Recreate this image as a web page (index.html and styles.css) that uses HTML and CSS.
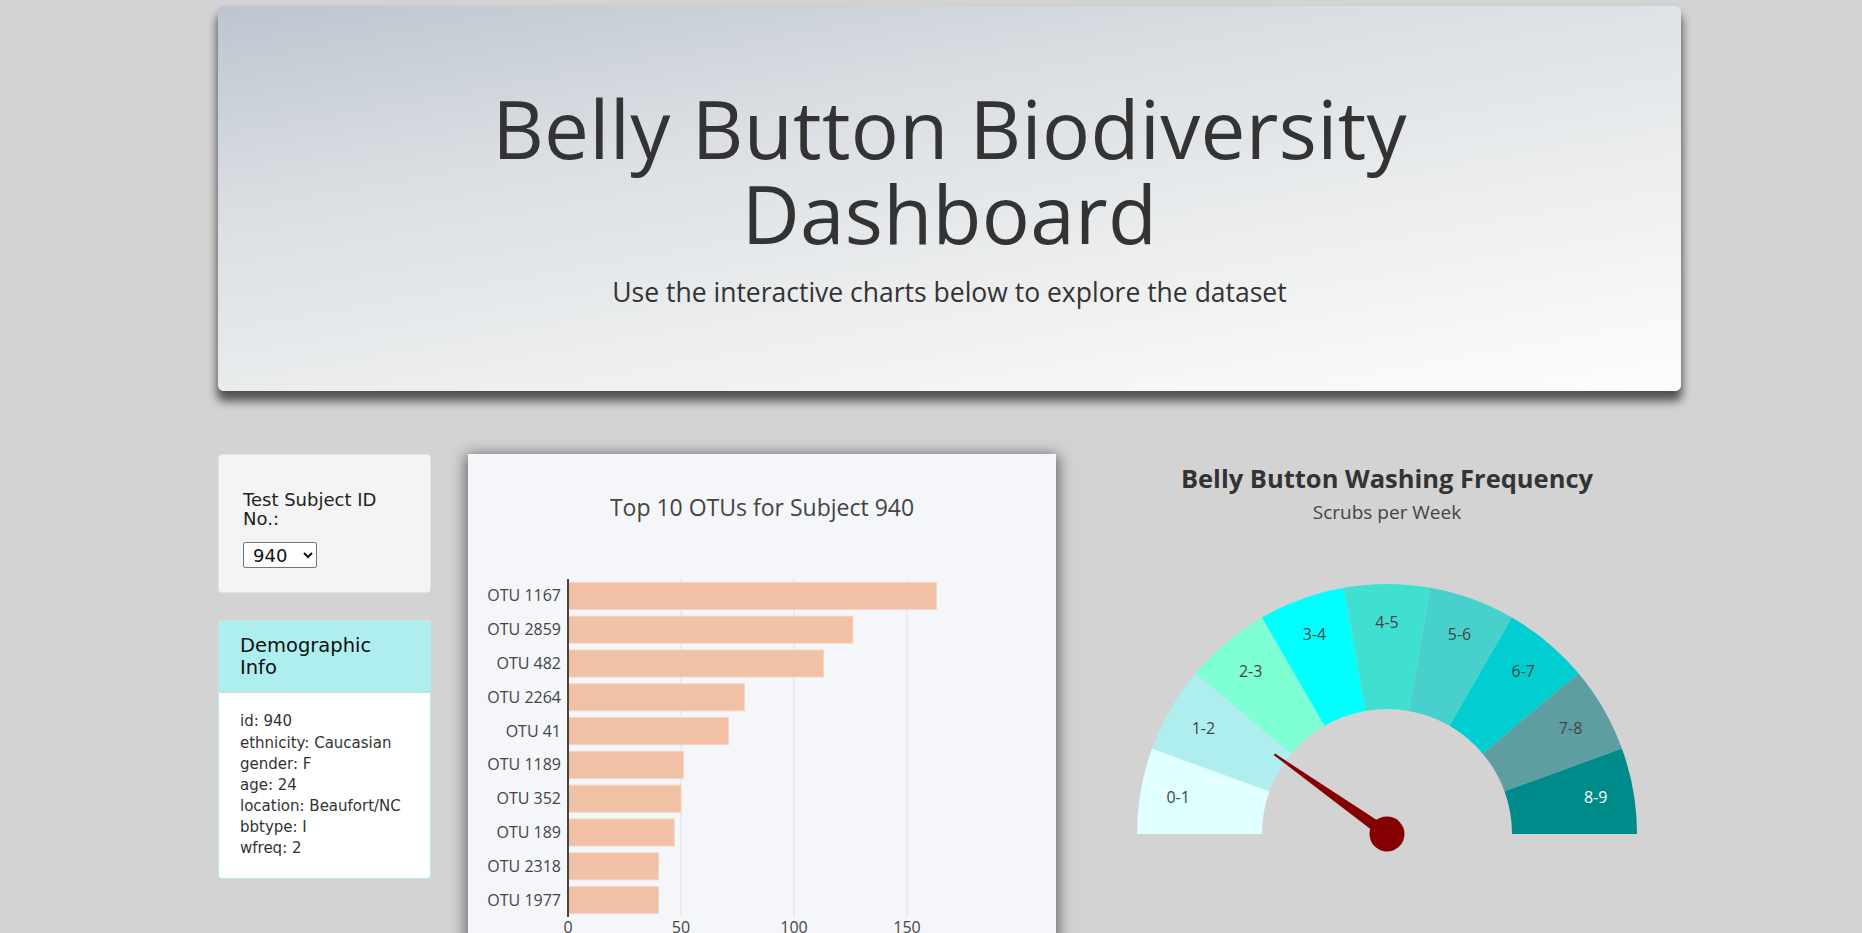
FILE: index.html
```html
<!DOCTYPE html>
<html lang="en">
<head>
<meta charset="utf-8">
<title>Belly Button Biodiversity Dashboard</title>
<link rel="stylesheet" href="styles.css">
</head>
<body>
<div class="page">
  <header class="jumbotron">
    <h1 class="jumbo-title"><span class="jumbo-line">Belly Button Biodiversity</span><span class="jumbo-line">Dashboard</span></h1>
    <p class="jumbo-sub">Use the interactive charts below to explore the dataset</p>
  </header>

  <div class="row">
    <aside class="side">
      <div class="well">
        <h5 class="well-label">Test Subject ID No.:</h5>
        <select class="subject-select">
          <option>940</option>
          <option>941</option>
          <option>943</option>
        </select>
      </div>
      <div class="panel">
        <div class="panel-heading">
          <h3 class="panel-title">Demographic Info</h3>
        </div>
        <div class="panel-body">
          <div class="meta">id: 940</div>
          <div class="meta">ethnicity: Caucasian</div>
          <div class="meta">gender: F</div>
          <div class="meta">age: 24</div>
          <div class="meta">location: Beaufort/NC</div>
          <div class="meta">bbtype: I</div>
          <div class="meta">wfreq: 2</div>
        </div>
      </div>
    </aside>

    <section class="bar-card">
      <svg class="bar-svg" width="588" height="520" viewBox="0 0 588 520">
        <text class="plot-title" x="294" y="62" text-anchor="middle">Top 10 OTUs for Subject 940</text>
        <g class="grid">
          <line x1="213" y1="125" x2="213" y2="463"/>
          <line x1="326" y1="125" x2="326" y2="463"/>
          <line x1="439" y1="125" x2="439" y2="463"/>
        </g>
        <g class="bars">
          <rect x="100" y="128.4" width="368.4" height="27"/>
          <rect x="100" y="162.2" width="284.8" height="27"/>
          <rect x="100" y="196.0" width="255.4" height="27"/>
          <rect x="100" y="229.8" width="176.3" height="27"/>
          <rect x="100" y="263.6" width="160.5" height="27"/>
          <rect x="100" y="297.4" width="115.3" height="27"/>
          <rect x="100" y="331.2" width="113.0" height="27"/>
          <rect x="100" y="365.0" width="106.2" height="27"/>
          <rect x="100" y="398.8" width="90.4" height="27"/>
          <rect x="100" y="432.6" width="90.4" height="27"/>
        </g>
        <line class="axis" x1="100" y1="125" x2="100" y2="463"/>
        <g class="ytick" text-anchor="end">
          <text x="93" y="147.4">OTU 1167</text>
          <text x="93" y="181.2">OTU 2859</text>
          <text x="93" y="215.0">OTU 482</text>
          <text x="93" y="248.8">OTU 2264</text>
          <text x="93" y="282.6">OTU 41</text>
          <text x="93" y="316.4">OTU 1189</text>
          <text x="93" y="350.2">OTU 352</text>
          <text x="93" y="384.0">OTU 189</text>
          <text x="93" y="417.8">OTU 2318</text>
          <text x="93" y="451.6">OTU 1977</text>
        </g>
        <g class="xtick" text-anchor="middle">
          <text x="100" y="479">0</text>
          <text x="213" y="479">50</text>
          <text x="326" y="479">100</text>
          <text x="439" y="479">150</text>
        </g>
      </svg>
    </section>

    <section class="gauge-col">
      <svg class="gauge-svg" width="588" height="440" viewBox="0 0 588 440">
        <text class="gauge-title" x="294" y="34" text-anchor="middle">Belly Button Washing Frequency</text>
        <text class="gauge-sub" x="294" y="65" text-anchor="middle">Scrubs per Week</text>
        <path fill="#e0ffff" d="M44 380 A250 250 0 0 1 59.1 294.5 L176.5 337.25 A125 125 0 0 0 169 380 Z"/>
        <path fill="#afeeee" d="M59.1 294.5 A250 250 0 0 1 102.5 219.3 L198.25 299.65 A125 125 0 0 0 176.5 337.25 Z"/>
        <path fill="#7fffd4" d="M102.5 219.3 A250 250 0 0 1 169 163.5 L231.5 271.75 A125 125 0 0 0 198.25 299.65 Z"/>
        <path fill="#00ffff" d="M169 163.5 A250 250 0 0 1 250.6 133.8 L272.3 256.9 A125 125 0 0 0 231.5 271.75 Z"/>
        <path fill="#40e0d0" d="M250.6 133.8 A250 250 0 0 1 337.4 133.8 L315.7 256.9 A125 125 0 0 0 272.3 256.9 Z"/>
        <path fill="#48d1cc" d="M337.4 133.8 A250 250 0 0 1 419 163.5 L356.5 271.75 A125 125 0 0 0 315.7 256.9 Z"/>
        <path fill="#00ced1" d="M419 163.5 A250 250 0 0 1 485.5 219.3 L389.75 299.65 A125 125 0 0 0 356.5 271.75 Z"/>
        <path fill="#5f9ea0" d="M485.5 219.3 A250 250 0 0 1 528.9 294.5 L411.5 337.25 A125 125 0 0 0 389.75 299.65 Z"/>
        <path fill="#008b8b" d="M528.9 294.5 A250 250 0 0 1 544 380 L419 380 A125 125 0 0 0 411.5 337.25 Z"/>
        <g class="gauge-label" text-anchor="middle">
          <text x="85.2" y="348.7">0-1</text>
          <text x="110.4" y="279.5">1-2</text>
          <text x="157.7" y="223.1">2-3</text>
          <text x="221.5" y="186.3">3-4</text>
          <text x="294" y="173.5">4-5</text>
          <text x="366.5" y="186.3">5-6</text>
          <text x="430.3" y="223.1">6-7</text>
          <text x="477.6" y="279.5">7-8</text>
          <text class="light" x="502.8" y="348.7">8-9</text>
        </g>
        <path class="needle" d="M297.5 375.1 L182 299.6 L180.6 300.9 L290.5 384.9 Z"/>
        <circle class="needle" cx="294" cy="380" r="17.5"/>
      </svg>
    </section>
  </div>
</div>
</body>
</html>
```

FILE: styles.css
```css
html, body {
  margin: 0;
  padding: 0;
}

body {
  background: #d3d3d3;
  font-family: "DejaVu Sans", Verdana, sans-serif;
  color: #333;
  overflow: hidden;
}

.page {
  width: 1463px;
  margin-left: 218px;
  padding-top: 6px;
}

.jumbotron {
  height: 385px;
  box-sizing: border-box;
  padding-top: 79px;
  border-radius: 6px;
  background: linear-gradient(170deg, #bcc5cf 0%, #d9dde2 30%, #eceeef 65%, #fdfdfb 100%);
  box-shadow: 0 9px 10px 1px rgba(0, 0, 0, 0.62);
  text-align: center;
  color: #333;
  font-family: "Open Sans", "Noto Sans", sans-serif;
}

.jumbo-title {
  margin: 0;
  font-size: 80px;
  font-weight: 400;
  letter-spacing: 0.3px;
}

.jumbo-line {
  display: block;
  height: 85px;
  line-height: 85px;
}

.jumbo-sub {
  margin: 19px 0 0;
  font-size: 26.5px;
  line-height: 36px;
}

.row {
  display: flex;
  gap: 37px;
  margin-top: 63px;
  align-items: flex-start;
}

.side {
  width: 213px;
  flex: none;
  display: flex;
  flex-direction: column;
  gap: 27px;
}

.well {
  box-sizing: border-box;
  height: 139px;
  padding: 36px 20px 0 24px;
  background: #f4f4f4;
  border: 1px solid #e3e3e3;
  border-radius: 4px;
}

.well-label {
  margin: 0;
  font-size: 18px;
  font-weight: 400;
  line-height: 18.5px;
  color: #222;
}

.subject-select {
  display: block;
  margin-top: 14px;
  width: 74px;
  height: 26px;
  font-family: "DejaVu Sans", Verdana, sans-serif;
  font-size: 18px;
  color: #111;
  background: #fff;
  border: 1px solid #767676;
  border-radius: 2px;
  padding: 0 2px 0 5px;
}

.panel {
  background: #fff;
  border: 1px solid #bce8f1;
  border-radius: 4px;
  overflow: hidden;
}

.panel-heading {
  background: #afeeee;
  padding: 14px 30px 14px 21px;
  border-bottom: 1px solid #d0d8d8;
}

.panel-title {
  margin: 0;
  font-size: 19.5px;
  font-weight: 400;
  line-height: 21.7px;
  color: #111;
}

.panel-body {
  padding: 18px 21px 19px;
}

.meta {
  font-size: 15px;
  line-height: 21.1px;
  color: #333;
}

.bar-card {
  width: 588px;
  flex: none;
  height: 520px;
  background: #f4f6fa;
  box-shadow: 0 3px 14px 2px rgba(0, 0, 0, 0.55);
}

.bar-svg {
  display: block;
  font-family: "Open Sans", "DejaVu Sans", sans-serif;
}

.plot-title {
  font-size: 23px;
  fill: #444;
}

.grid line {
  stroke: #e3e3e8;
  stroke-width: 1.2;
}

.bars rect {
  fill: #f0c1a5;
  stroke: #f4d3c0;
  stroke-width: 1;
}

.axis {
  stroke: #444;
  stroke-width: 2;
}

.ytick text,
.xtick text {
  font-size: 16px;
  fill: #444;
}

.gauge-col {
  width: 588px;
  flex: none;
}

.gauge-svg {
  display: block;
  font-family: "Open Sans", "DejaVu Sans", sans-serif;
}

.gauge-title {
  font-size: 25.5px;
  font-weight: 700;
  fill: #333;
}

.gauge-sub {
  font-size: 19px;
  fill: #444;
}

.gauge-label text {
  font-size: 16px;
  fill: #444;
}

.gauge-label text.light {
  fill: #fff;
}

.needle {
  fill: #850000;
}
```
